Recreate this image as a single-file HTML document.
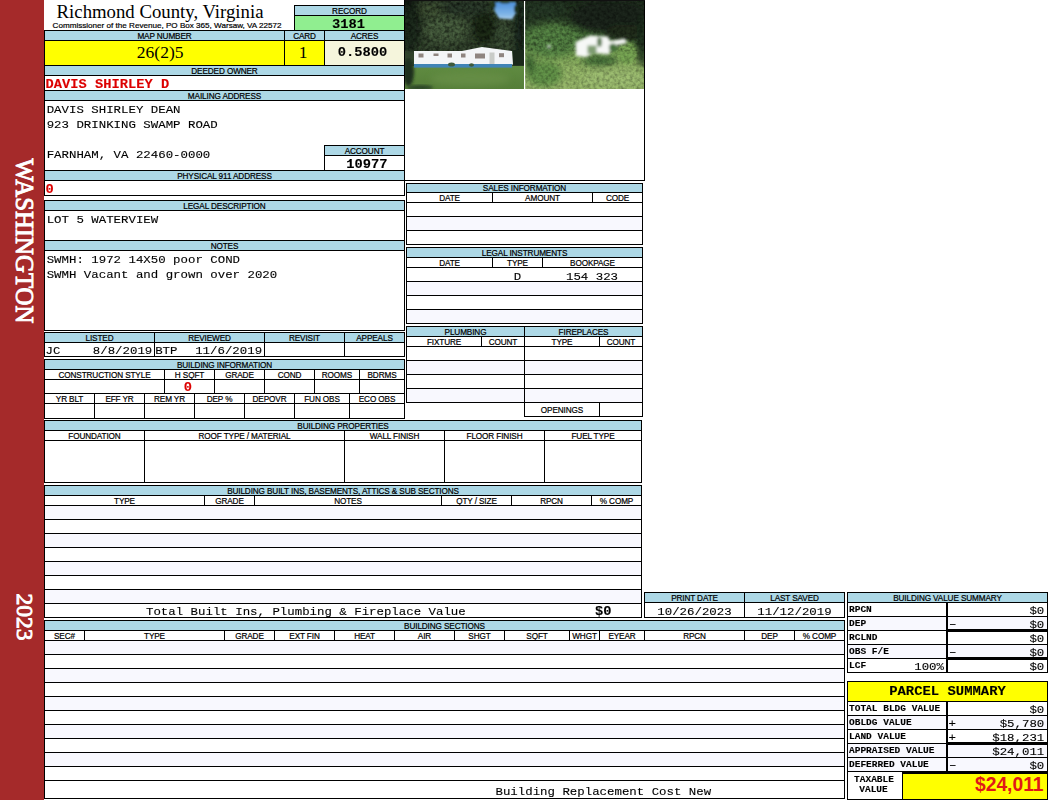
<!DOCTYPE html>
<html lang="en"><head><meta charset="utf-8"><title>Richmond County, Virginia - Property Record 3181</title>
<style>
html,body{margin:0;padding:0;background:#fff;}
body{width:1050px;height:800px;position:relative;overflow:hidden;font-family:"Liberation Sans",Arial,sans-serif;color:#000;}
.c{position:absolute;box-sizing:border-box;border:1px solid #000;}
.k{position:absolute;background:#000;}
.x{position:absolute;white-space:pre;margin:0;padding:0;}
.s{font-family:"Liberation Sans",Arial,sans-serif;-webkit-text-stroke:0.2px #000;}
.m{font-family:"Liberation Mono","Courier New",monospace;-webkit-text-stroke:0.12px currentColor;}
.t{font-family:"Liberation Serif","Times New Roman",serif;}
.side{position:absolute;left:0;top:0;width:44px;height:800px;background:#a52a2a;}
.vt{position:absolute;color:#fff;font-family:"Liberation Serif","Times New Roman",serif;font-weight:normal;-webkit-text-stroke:0.9px #fff;white-space:pre;line-height:1;transform:translate(-50%,-50%) rotate(90deg);}
</style></head>
<body>
<div class="side"></div>
<div class="vt" style="left:24px;top:241px;font-size:24.8px;">WASHINGTON</div>
<div class="vt" style="left:24.2px;top:617px;font-size:23.6px;">2023</div>
<div class="x t" style="top:0px;font-size:18.75px;line-height:23px;height:23px;left:56.6px;">Richmond County, Virginia</div>
<div class="x s" style="top:20px;font-size:8.1px;line-height:11px;height:11px;left:52.6px;">Commissioner of the Revenue, PO Box 365, Warsaw, VA 22572</div>
<div class="c" style="left:294px;top:5px;width:111px;height:11px;background:#add8e6;"></div>
<div class="x s" style="top:6px;font-size:8.2px;line-height:11px;height:11px;left:274.5px;width:150px;text-align:center;letter-spacing:-0.12px;">RECORD</div>
<div class="c" style="left:294px;top:15px;width:111px;height:16px;background:#90ee90;"></div>
<div class="x m" style="top:16px;font-size:13.75px;line-height:17px;height:17px;left:298.5px;width:100px;text-align:center;font-weight:bold;transform:scaleY(0.88);transform-origin:50% 12px;">3181</div>
<div class="c" style="left:44px;top:30px;width:241px;height:11px;background:#add8e6;"></div>
<div class="x s" style="top:31px;font-size:8.2px;line-height:11px;height:11px;left:24.5px;width:280px;text-align:center;letter-spacing:-0.12px;">MAP NUMBER</div>
<div class="c" style="left:284px;top:30px;width:41px;height:11px;background:#add8e6;"></div>
<div class="x s" style="top:31px;font-size:8.2px;line-height:11px;height:11px;left:264.5px;width:80px;text-align:center;letter-spacing:-0.12px;">CARD</div>
<div class="c" style="left:324px;top:30px;width:81px;height:11px;background:#add8e6;"></div>
<div class="x s" style="top:31px;font-size:8.2px;line-height:11px;height:11px;left:304.5px;width:120px;text-align:center;letter-spacing:-0.12px;">ACRES</div>
<div class="c" style="left:44px;top:40px;width:241px;height:26px;background:#ffff00;"></div>
<div class="c" style="left:284px;top:40px;width:41px;height:26px;background:#ffff00;"></div>
<div class="c" style="left:324px;top:40px;width:81px;height:26px;background:#f5f5dc;"></div>
<div class="x t" style="top:41px;font-size:17.5px;line-height:22px;height:22px;left:60.2px;width:200px;text-align:center;">26(2)5</div>
<div class="x t" style="top:41px;font-size:17.5px;line-height:22px;height:22px;left:288.2px;width:30px;text-align:center;">1</div>
<div class="x m" style="top:44px;font-size:13.75px;line-height:17px;height:17px;left:323.5px;width:78px;text-align:center;font-weight:bold;transform:scaleY(0.88);transform-origin:50% 12px;">0.5800</div>
<div class="c" style="left:44px;top:65px;width:361px;height:11px;background:#add8e6;"></div>
<div class="x s" style="top:66px;font-size:8.2px;line-height:11px;height:11px;left:24.5px;width:400px;text-align:center;letter-spacing:-0.12px;">DEEDED OWNER</div>
<div class="c" style="left:44px;top:75px;width:361px;height:16px;"></div>
<div class="x m" style="top:76px;font-size:13.75px;line-height:17px;height:17px;left:45.6px;color:#dc0000;font-weight:bold;transform:scaleY(0.88);transform-origin:0 12px;">DAVIS SHIRLEY D</div>
<div class="c" style="left:44px;top:90px;width:361px;height:11px;background:#add8e6;"></div>
<div class="x s" style="top:91px;font-size:8.2px;line-height:11px;height:11px;left:24.5px;width:400px;text-align:center;letter-spacing:-0.12px;">MAILING ADDRESS</div>
<div class="c" style="left:44px;top:100px;width:361px;height:71px;"></div>
<div class="x m" style="top:102px;font-size:12.4px;line-height:16px;height:16px;left:46.7px;transform:scaleY(0.88);transform-origin:0 11px;">DAVIS SHIRLEY DEAN</div>
<div class="x m" style="top:117px;font-size:12.4px;line-height:16px;height:16px;left:46.7px;transform:scaleY(0.88);transform-origin:0 11px;">923 DRINKING SWAMP ROAD</div>
<div class="x m" style="top:147px;font-size:12.4px;line-height:16px;height:16px;left:46.7px;transform:scaleY(0.88);transform-origin:0 11px;">FARNHAM, VA 22460-0000</div>
<div class="c" style="left:324px;top:145px;width:81px;height:11px;background:#add8e6;"></div>
<div class="x s" style="top:146px;font-size:8.2px;line-height:11px;height:11px;left:304.5px;width:120px;text-align:center;letter-spacing:-0.12px;">ACCOUNT</div>
<div class="c" style="left:324px;top:155px;width:81px;height:16px;"></div>
<div class="x m" style="top:156px;font-size:13.75px;line-height:17px;height:17px;left:328.0px;width:78px;text-align:center;font-weight:bold;transform:scaleY(0.88);transform-origin:50% 12px;">10977</div>
<div class="c" style="left:44px;top:170px;width:361px;height:11px;background:#add8e6;"></div>
<div class="x s" style="top:171px;font-size:8.2px;line-height:11px;height:11px;left:24.5px;width:400px;text-align:center;letter-spacing:-0.12px;">PHYSICAL 911 ADDRESS</div>
<div class="c" style="left:44px;top:180px;width:361px;height:16px;"></div>
<div class="x m" style="top:181px;font-size:13.75px;line-height:17px;height:17px;left:45.6px;color:#dc0000;font-weight:bold;transform:scaleY(0.88);transform-origin:0 12px;">0</div>
<div class="c" style="left:44px;top:200px;width:361px;height:11px;background:#add8e6;"></div>
<div class="x s" style="top:201px;font-size:8.2px;line-height:11px;height:11px;left:24.5px;width:400px;text-align:center;letter-spacing:-0.12px;">LEGAL DESCRIPTION</div>
<div class="c" style="left:44px;top:210px;width:361px;height:31px;"></div>
<div class="x m" style="top:212px;font-size:12.4px;line-height:16px;height:16px;left:46.7px;transform:scaleY(0.88);transform-origin:0 11px;">LOT 5 WATERVIEW</div>
<div class="c" style="left:44px;top:240px;width:361px;height:11px;background:#add8e6;"></div>
<div class="x s" style="top:241px;font-size:8.2px;line-height:11px;height:11px;left:24.5px;width:400px;text-align:center;letter-spacing:-0.12px;">NOTES</div>
<div class="c" style="left:44px;top:250px;width:361px;height:81px;"></div>
<div class="x m" style="top:252px;font-size:12.4px;line-height:16px;height:16px;left:46.7px;transform:scaleY(0.88);transform-origin:0 11px;">SWMH: 1972 14X50 poor COND</div>
<div class="x m" style="top:267px;font-size:12.4px;line-height:16px;height:16px;left:46.7px;transform:scaleY(0.88);transform-origin:0 11px;">SWMH Vacant and grown over 2020</div>
<div class="c" style="left:44px;top:332px;width:111px;height:11px;background:#add8e6;"></div>
<div class="x s" style="top:333px;font-size:8.2px;line-height:11px;height:11px;left:24.5px;width:150px;text-align:center;letter-spacing:-0.12px;">LISTED</div>
<div class="c" style="left:44px;top:342px;width:111px;height:15px;"></div>
<div class="c" style="left:154px;top:332px;width:111px;height:11px;background:#add8e6;"></div>
<div class="x s" style="top:333px;font-size:8.2px;line-height:11px;height:11px;left:134.5px;width:150px;text-align:center;letter-spacing:-0.12px;">REVIEWED</div>
<div class="c" style="left:154px;top:342px;width:111px;height:15px;"></div>
<div class="c" style="left:264px;top:332px;width:81px;height:11px;background:#add8e6;"></div>
<div class="x s" style="top:333px;font-size:8.2px;line-height:11px;height:11px;left:244.5px;width:120px;text-align:center;letter-spacing:-0.12px;">REVISIT</div>
<div class="c" style="left:264px;top:342px;width:81px;height:15px;"></div>
<div class="c" style="left:344px;top:332px;width:61px;height:11px;background:#add8e6;"></div>
<div class="x s" style="top:333px;font-size:8.2px;line-height:11px;height:11px;left:324.5px;width:100px;text-align:center;letter-spacing:-0.12px;">APPEALS</div>
<div class="c" style="left:344px;top:342px;width:61px;height:15px;"></div>
<div class="x m" style="top:343px;font-size:12.4px;line-height:16px;height:16px;left:45.6px;transform:scaleY(0.88);transform-origin:0 11px;">JC</div>
<div class="x m" style="top:343px;font-size:12.4px;line-height:16px;height:16px;left:92.8px;transform:scaleY(0.88);transform-origin:0 11px;">8/8/2019</div>
<div class="x m" style="top:343px;font-size:12.4px;line-height:16px;height:16px;left:155.2px;transform:scaleY(0.88);transform-origin:0 11px;">BTP</div>
<div class="x m" style="top:343px;font-size:12.4px;line-height:16px;height:16px;left:195.2px;transform:scaleY(0.88);transform-origin:0 11px;">11/6/2019</div>
<div class="c" style="left:44px;top:359px;width:361px;height:11px;background:#add8e6;"></div>
<div class="x s" style="top:360px;font-size:8.2px;line-height:11px;height:11px;left:24.5px;width:400px;text-align:center;letter-spacing:-0.12px;">BUILDING INFORMATION</div>
<div class="c" style="left:44px;top:369px;width:121px;height:11px;"></div>
<div class="x s" style="top:370px;font-size:8.2px;line-height:11px;height:11px;left:24.5px;width:160px;text-align:center;letter-spacing:-0.12px;">CONSTRUCTION STYLE</div>
<div class="c" style="left:44px;top:379px;width:121px;height:15px;"></div>
<div class="c" style="left:164px;top:369px;width:51px;height:11px;"></div>
<div class="x s" style="top:370px;font-size:8.2px;line-height:11px;height:11px;left:144.5px;width:90px;text-align:center;letter-spacing:-0.12px;">H SQFT</div>
<div class="c" style="left:164px;top:379px;width:51px;height:15px;"></div>
<div class="c" style="left:214px;top:369px;width:51px;height:11px;"></div>
<div class="x s" style="top:370px;font-size:8.2px;line-height:11px;height:11px;left:194.5px;width:90px;text-align:center;letter-spacing:-0.12px;">GRADE</div>
<div class="c" style="left:214px;top:379px;width:51px;height:15px;"></div>
<div class="c" style="left:264px;top:369px;width:51px;height:11px;"></div>
<div class="x s" style="top:370px;font-size:8.2px;line-height:11px;height:11px;left:244.5px;width:90px;text-align:center;letter-spacing:-0.12px;">COND</div>
<div class="c" style="left:264px;top:379px;width:51px;height:15px;"></div>
<div class="c" style="left:314px;top:369px;width:46px;height:11px;"></div>
<div class="x s" style="top:370px;font-size:8.2px;line-height:11px;height:11px;left:294.5px;width:85px;text-align:center;letter-spacing:-0.12px;">ROOMS</div>
<div class="c" style="left:314px;top:379px;width:46px;height:15px;"></div>
<div class="c" style="left:359px;top:369px;width:46px;height:11px;"></div>
<div class="x s" style="top:370px;font-size:8.2px;line-height:11px;height:11px;left:339.5px;width:85px;text-align:center;letter-spacing:-0.12px;">BDRMS</div>
<div class="c" style="left:359px;top:379px;width:46px;height:15px;"></div>
<div class="x m" style="top:379px;font-size:13.75px;line-height:17px;height:17px;left:168.0px;width:40px;text-align:center;color:#dc0000;font-weight:bold;transform:scaleY(0.88);transform-origin:50% 12px;">0</div>
<div class="c" style="left:44px;top:393px;width:51px;height:11px;"></div>
<div class="x s" style="top:394px;font-size:8.2px;line-height:11px;height:11px;left:24.5px;width:90px;text-align:center;letter-spacing:-0.12px;">YR BLT</div>
<div class="c" style="left:44px;top:403px;width:51px;height:16px;"></div>
<div class="c" style="left:94px;top:393px;width:51px;height:11px;"></div>
<div class="x s" style="top:394px;font-size:8.2px;line-height:11px;height:11px;left:74.5px;width:90px;text-align:center;letter-spacing:-0.12px;">EFF YR</div>
<div class="c" style="left:94px;top:403px;width:51px;height:16px;"></div>
<div class="c" style="left:144px;top:393px;width:51px;height:11px;"></div>
<div class="x s" style="top:394px;font-size:8.2px;line-height:11px;height:11px;left:124.5px;width:90px;text-align:center;letter-spacing:-0.12px;">REM YR</div>
<div class="c" style="left:144px;top:403px;width:51px;height:16px;"></div>
<div class="c" style="left:194px;top:393px;width:51px;height:11px;"></div>
<div class="x s" style="top:394px;font-size:8.2px;line-height:11px;height:11px;left:174.5px;width:90px;text-align:center;letter-spacing:-0.12px;">DEP %</div>
<div class="c" style="left:194px;top:403px;width:51px;height:16px;"></div>
<div class="c" style="left:244px;top:393px;width:51px;height:11px;"></div>
<div class="x s" style="top:394px;font-size:8.2px;line-height:11px;height:11px;left:224.5px;width:90px;text-align:center;letter-spacing:-0.12px;">DEPOVR</div>
<div class="c" style="left:244px;top:403px;width:51px;height:16px;"></div>
<div class="c" style="left:294px;top:393px;width:56px;height:11px;"></div>
<div class="x s" style="top:394px;font-size:8.2px;line-height:11px;height:11px;left:274.5px;width:95px;text-align:center;letter-spacing:-0.12px;">FUN OBS</div>
<div class="c" style="left:294px;top:403px;width:56px;height:16px;"></div>
<div class="c" style="left:349px;top:393px;width:56px;height:11px;"></div>
<div class="x s" style="top:394px;font-size:8.2px;line-height:11px;height:11px;left:329.5px;width:95px;text-align:center;letter-spacing:-0.12px;">ECO OBS</div>
<div class="c" style="left:349px;top:403px;width:56px;height:16px;"></div>
<div class="c" style="left:44px;top:420px;width:598px;height:11px;background:#add8e6;"></div>
<div class="x s" style="top:421px;font-size:8.2px;line-height:11px;height:11px;left:24.5px;width:637px;text-align:center;letter-spacing:-0.12px;">BUILDING PROPERTIES</div>
<div class="c" style="left:44px;top:430px;width:101px;height:11px;"></div>
<div class="x s" style="top:431px;font-size:8.2px;line-height:11px;height:11px;left:24.5px;width:140px;text-align:center;letter-spacing:-0.12px;">FOUNDATION</div>
<div class="c" style="left:44px;top:440px;width:101px;height:43px;"></div>
<div class="c" style="left:144px;top:430px;width:201px;height:11px;"></div>
<div class="x s" style="top:431px;font-size:8.2px;line-height:11px;height:11px;left:124.5px;width:240px;text-align:center;letter-spacing:-0.12px;">ROOF TYPE / MATERIAL</div>
<div class="c" style="left:144px;top:440px;width:201px;height:43px;"></div>
<div class="c" style="left:344px;top:430px;width:101px;height:11px;"></div>
<div class="x s" style="top:431px;font-size:8.2px;line-height:11px;height:11px;left:324.5px;width:140px;text-align:center;letter-spacing:-0.12px;">WALL FINISH</div>
<div class="c" style="left:344px;top:440px;width:101px;height:43px;"></div>
<div class="c" style="left:444px;top:430px;width:101px;height:11px;"></div>
<div class="x s" style="top:431px;font-size:8.2px;line-height:11px;height:11px;left:424.5px;width:140px;text-align:center;letter-spacing:-0.12px;">FLOOR FINISH</div>
<div class="c" style="left:444px;top:440px;width:101px;height:43px;"></div>
<div class="c" style="left:544px;top:430px;width:98px;height:11px;"></div>
<div class="x s" style="top:431px;font-size:8.2px;line-height:11px;height:11px;left:524.5px;width:137px;text-align:center;letter-spacing:-0.12px;">FUEL TYPE</div>
<div class="c" style="left:544px;top:440px;width:98px;height:43px;"></div>
<div class="c" style="left:44px;top:485px;width:598px;height:11px;background:#add8e6;"></div>
<div class="x s" style="top:486px;font-size:8.2px;line-height:11px;height:11px;left:24.5px;width:637px;text-align:center;letter-spacing:-0.12px;">BUILDING BUILT INS, BASEMENTS, ATTICS &amp; SUB SECTIONS</div>
<div class="c" style="left:44px;top:495px;width:161px;height:11px;"></div>
<div class="x s" style="top:496px;font-size:8.2px;line-height:11px;height:11px;left:24.5px;width:200px;text-align:center;letter-spacing:-0.12px;">TYPE</div>
<div class="c" style="left:204px;top:495px;width:51px;height:11px;"></div>
<div class="x s" style="top:496px;font-size:8.2px;line-height:11px;height:11px;left:184.5px;width:90px;text-align:center;letter-spacing:-0.12px;">GRADE</div>
<div class="c" style="left:254px;top:495px;width:188px;height:11px;"></div>
<div class="x s" style="top:496px;font-size:8.2px;line-height:11px;height:11px;left:234.5px;width:227px;text-align:center;letter-spacing:-0.12px;">NOTES</div>
<div class="c" style="left:441px;top:495px;width:71px;height:11px;"></div>
<div class="x s" style="top:496px;font-size:8.2px;line-height:11px;height:11px;left:421.5px;width:110px;text-align:center;letter-spacing:-0.12px;">QTY / SIZE</div>
<div class="c" style="left:511px;top:495px;width:81px;height:11px;"></div>
<div class="x s" style="top:496px;font-size:8.2px;line-height:11px;height:11px;left:491.5px;width:120px;text-align:center;letter-spacing:-0.12px;">RPCN</div>
<div class="c" style="left:591px;top:495px;width:51px;height:11px;"></div>
<div class="x s" style="top:496px;font-size:8.2px;line-height:11px;height:11px;left:571.5px;width:90px;text-align:center;letter-spacing:-0.12px;">% COMP</div>
<div class="c" style="left:44px;top:505px;width:598px;height:15px;background:#f8f8fe;"></div>
<div class="c" style="left:44px;top:519px;width:598px;height:15px;"></div>
<div class="c" style="left:44px;top:533px;width:598px;height:15px;background:#f8f8fe;"></div>
<div class="c" style="left:44px;top:547px;width:598px;height:15px;"></div>
<div class="c" style="left:44px;top:561px;width:598px;height:15px;background:#f8f8fe;"></div>
<div class="c" style="left:44px;top:575px;width:598px;height:15px;"></div>
<div class="c" style="left:44px;top:589px;width:598px;height:15px;background:#f8f8fe;"></div>
<div class="c" style="left:44px;top:603px;width:598px;height:15px;"></div>
<div class="x m" style="top:604px;font-size:12.4px;line-height:16px;height:16px;left:146px;transform:scaleY(0.88);transform-origin:0 11px;">Total Built Ins, Plumbing &amp; Fireplace Value</div>
<div class="x m" style="top:603px;font-size:13.75px;line-height:17px;height:17px;left:551.5px;width:60px;text-align:right;font-weight:bold;transform:scaleY(0.88);transform-origin:100% 12px;">$0</div>
<div class="c" style="left:44px;top:620px;width:801px;height:11px;background:#add8e6;"></div>
<div class="x s" style="top:621px;font-size:8.2px;line-height:11px;height:11px;left:24.5px;width:840px;text-align:center;letter-spacing:-0.12px;">BUILDING SECTIONS</div>
<div class="c" style="left:44px;top:630px;width:41px;height:11px;"></div>
<div class="x s" style="top:631px;font-size:8.2px;line-height:11px;height:11px;left:24.5px;width:80px;text-align:center;letter-spacing:-0.12px;">SEC#</div>
<div class="c" style="left:84px;top:630px;width:141px;height:11px;"></div>
<div class="x s" style="top:631px;font-size:8.2px;line-height:11px;height:11px;left:64.5px;width:180px;text-align:center;letter-spacing:-0.12px;">TYPE</div>
<div class="c" style="left:224px;top:630px;width:51px;height:11px;"></div>
<div class="x s" style="top:631px;font-size:8.2px;line-height:11px;height:11px;left:204.5px;width:90px;text-align:center;letter-spacing:-0.12px;">GRADE</div>
<div class="c" style="left:274px;top:630px;width:61px;height:11px;"></div>
<div class="x s" style="top:631px;font-size:8.2px;line-height:11px;height:11px;left:254.5px;width:100px;text-align:center;letter-spacing:-0.12px;">EXT FIN</div>
<div class="c" style="left:334px;top:630px;width:61px;height:11px;"></div>
<div class="x s" style="top:631px;font-size:8.2px;line-height:11px;height:11px;left:314.5px;width:100px;text-align:center;letter-spacing:-0.12px;">HEAT</div>
<div class="c" style="left:394px;top:630px;width:61px;height:11px;"></div>
<div class="x s" style="top:631px;font-size:8.2px;line-height:11px;height:11px;left:374.5px;width:100px;text-align:center;letter-spacing:-0.12px;">AIR</div>
<div class="c" style="left:454px;top:630px;width:51px;height:11px;"></div>
<div class="x s" style="top:631px;font-size:8.2px;line-height:11px;height:11px;left:434.5px;width:90px;text-align:center;letter-spacing:-0.12px;">SHGT</div>
<div class="c" style="left:504px;top:630px;width:66px;height:11px;"></div>
<div class="x s" style="top:631px;font-size:8.2px;line-height:11px;height:11px;left:484.5px;width:105px;text-align:center;letter-spacing:-0.12px;">SQFT</div>
<div class="c" style="left:569px;top:630px;width:31px;height:11px;"></div>
<div class="x s" style="top:631px;font-size:8.2px;line-height:11px;height:11px;left:549.5px;width:70px;text-align:center;letter-spacing:-0.12px;">WHGT</div>
<div class="c" style="left:599px;top:630px;width:46px;height:11px;"></div>
<div class="x s" style="top:631px;font-size:8.2px;line-height:11px;height:11px;left:579.5px;width:85px;text-align:center;letter-spacing:-0.12px;">EYEAR</div>
<div class="c" style="left:644px;top:630px;width:101px;height:11px;"></div>
<div class="x s" style="top:631px;font-size:8.2px;line-height:11px;height:11px;left:624.5px;width:140px;text-align:center;letter-spacing:-0.12px;">RPCN</div>
<div class="c" style="left:744px;top:630px;width:51px;height:11px;"></div>
<div class="x s" style="top:631px;font-size:8.2px;line-height:11px;height:11px;left:724.5px;width:90px;text-align:center;letter-spacing:-0.12px;">DEP</div>
<div class="c" style="left:794px;top:630px;width:51px;height:11px;"></div>
<div class="x s" style="top:631px;font-size:8.2px;line-height:11px;height:11px;left:774.5px;width:90px;text-align:center;letter-spacing:-0.12px;">% COMP</div>
<div class="c" style="left:44px;top:640px;width:801px;height:15px;background:#f8f8fe;"></div>
<div class="c" style="left:44px;top:654px;width:801px;height:15px;"></div>
<div class="c" style="left:44px;top:668px;width:801px;height:15px;background:#f8f8fe;"></div>
<div class="c" style="left:44px;top:682px;width:801px;height:15px;"></div>
<div class="c" style="left:44px;top:696px;width:801px;height:15px;background:#f8f8fe;"></div>
<div class="c" style="left:44px;top:710px;width:801px;height:15px;"></div>
<div class="c" style="left:44px;top:724px;width:801px;height:15px;background:#f8f8fe;"></div>
<div class="c" style="left:44px;top:738px;width:801px;height:15px;"></div>
<div class="c" style="left:44px;top:752px;width:801px;height:15px;background:#f8f8fe;"></div>
<div class="c" style="left:44px;top:766px;width:801px;height:15px;"></div>
<div class="c" style="left:44px;top:780px;width:801px;height:19px;"></div>
<div class="x m" style="top:784px;font-size:12.4px;line-height:16px;height:16px;left:495.5px;transform:scaleY(0.88);transform-origin:0 11px;">Building Replacement Cost New</div>
<div class="c" style="left:404px;top:0px;width:241px;height:181px;background:#ffffff;"></div>
<svg class="ph" width="240" height="90" viewBox="405 0 240 90" style="position:absolute;left:405px;top:0px">
<defs>
<filter id="b1" x="-20%" y="-20%" width="140%" height="140%"><feGaussianBlur stdDeviation="1.4"/></filter>
<filter id="b2" x="-20%" y="-20%" width="140%" height="140%"><feGaussianBlur stdDeviation="3"/></filter>
<filter id="b0" x="-10%" y="-10%" width="120%" height="120%"><feGaussianBlur stdDeviation="0.5"/></filter>
<filter id="b05" x="-10%" y="-10%" width="120%" height="120%"><feGaussianBlur stdDeviation="0.8"/></filter>
<filter id="nz" x="0" y="0" width="100%" height="100%">
<feTurbulence type="fractalNoise" baseFrequency="0.3" numOctaves="2" seed="11" result="n"/>
<feColorMatrix in="n" type="matrix" values="0 0 0 0 0  0 0 0 0 0  0 0 0 0 0  2.2 0 0 0 -0.85" result="a"/>
<feComposite in="a" in2="SourceGraphic" operator="in"/>
</filter>
<filter id="nl" x="0" y="0" width="100%" height="100%">
<feTurbulence type="fractalNoise" baseFrequency="0.33" numOctaves="2" seed="23" result="n"/>
<feColorMatrix in="n" type="matrix" values="0 0 0 0 0  0 0 0 0 0  0 0 0 0 0  0 2.2 0 0 -0.9" result="a"/>
<feComposite in="a" in2="SourceGraphic" operator="in"/>
</filter>
<linearGradient id="lawn" x1="0" y1="0" x2="0" y2="1"><stop offset="0" stop-color="#608b41"/><stop offset="1" stop-color="#557e39"/></linearGradient>
<linearGradient id="sky" x1="0" y1="0" x2="0" y2="1"><stop offset="0" stop-color="#4b8fdc"/><stop offset="0.7" stop-color="#7fb4e6"/><stop offset="1" stop-color="#a9cdea"/></linearGradient>
<linearGradient id="p2" x1="0" y1="0" x2="0" y2="1"><stop offset="0" stop-color="#1f2e1d"/><stop offset="0.25" stop-color="#2b4027"/><stop offset="0.42" stop-color="#4a763c"/><stop offset="0.58" stop-color="#76a052"/><stop offset="0.75" stop-color="#92b566"/><stop offset="1" stop-color="#9aba6c"/></linearGradient>
<clipPath id="c1"><rect x="405" y="1" width="119" height="88"/></clipPath>
<clipPath id="c2"><rect x="525.200" y="1" width="118.800" height="88"/></clipPath>
</defs>
<rect x="405" y="0" width="240" height="1" fill="#111"/>
<g clip-path="url(#c1)">
<rect x="405" y="1" width="120" height="88" fill="#34452e"/>
<g filter="url(#b2)">
<ellipse cx="411" cy="22" rx="10" ry="30" fill="#1a291a"/>
<ellipse cx="446" cy="30" rx="22" ry="14" fill="#4a6040"/>
<ellipse cx="466" cy="8" rx="26" ry="8" fill="#2c3b29"/>
<ellipse cx="484" cy="28" rx="12" ry="16" fill="#1a2a19"/>
<ellipse cx="430" cy="10" rx="12" ry="7" fill="#3f5236"/>
<ellipse cx="407" cy="3" rx="7" ry="4" fill="#0a0f0a"/>
<ellipse cx="503" cy="36" rx="9" ry="12" fill="#3d5237"/>
<ellipse cx="520" cy="30" rx="5" ry="34" fill="#17251a"/>
</g>
<rect x="405" y="1" width="119" height="50" fill="#0d140d" filter="url(#nz)" opacity="0.5"/>
<rect x="405" y="1" width="119" height="50" fill="#7d9072" filter="url(#nl)" opacity="0.3"/>
<g filter="url(#b05)">
<path d="M494 2 L516 2 L516 13 L512 19.500 L499 18.500 L494.500 11 Z" fill="url(#sky)"/>
<ellipse cx="493" cy="5" rx="3" ry="3.500" fill="#22351f"/>
<ellipse cx="505" cy="2" rx="5" ry="1.500" fill="#2a3f27"/>
<ellipse cx="516" cy="9" rx="2" ry="4" fill="#1f301d"/>
</g>
<rect x="405" y="66" width="120" height="23" fill="url(#lawn)"/>
<ellipse cx="470" cy="79" rx="40" ry="7" fill="#688f46" filter="url(#b2)" opacity="0.8"/>
<ellipse cx="408.500" cy="72" rx="5.500" ry="14" fill="#1d2d1b" filter="url(#b1)"/>
<ellipse cx="420" cy="87.500" rx="13" ry="2.500" fill="#2a4526" filter="url(#b1)"/>
<rect x="513" y="50" width="11" height="15.500" fill="#1a281a"/>
<g filter="url(#b0)">
<path d="M414 51 L462 51 L482 47 L512 51 L513 64.500 L414 64.500 Z" fill="#f3f5f7"/>
<rect x="414" y="64" width="98" height="3.600" fill="#3f84b6"/>
<g fill="#8f8580">
<rect x="418.500" y="53.500" width="5" height="4"/>
<rect x="433.500" y="53.500" width="5" height="2.500"/>
<rect x="447.500" y="53.500" width="4.500" height="4"/>
<rect x="461" y="53.500" width="4.500" height="4"/>
<rect x="475" y="53.500" width="10" height="5"/>
<rect x="499" y="53.200" width="5" height="4"/>
</g>
<rect x="489.500" y="52.500" width="5" height="11.500" fill="#c9ccc8"/>
<ellipse cx="451.500" cy="64.500" rx="3.500" ry="2" fill="#3c5a3a"/>
<ellipse cx="471.500" cy="65" rx="2.500" ry="1.800" fill="#3c5a3a"/>
</g>
</g>
<g clip-path="url(#c2)">
<rect x="525" y="1" width="120" height="88" fill="url(#p2)"/>
<g filter="url(#b2)">
<ellipse cx="552" cy="40" rx="28" ry="17" fill="#568545"/>
<ellipse cx="544" cy="74" rx="18" ry="13" fill="#639448"/>
<ellipse cx="610" cy="16" rx="40" ry="16" fill="#1b261a"/>
<ellipse cx="545" cy="9" rx="22" ry="8" fill="#283a25"/>
<ellipse cx="625" cy="33" rx="22" ry="9" fill="#202e1f"/>
<ellipse cx="642" cy="40" rx="5" ry="28" fill="#1f2d1e"/>
<ellipse cx="600" cy="61" rx="18" ry="5" fill="#3f6b36"/>
<ellipse cx="615" cy="78" rx="34" ry="9" fill="#9fbf72"/>
<ellipse cx="530" cy="64" rx="4" ry="10" fill="#2f5a2c"/>
</g>
<ellipse cx="627" cy="53" rx="9" ry="11" fill="#7aa955" filter="url(#b1)"/>
<rect x="525" y="1" width="120" height="50" fill="#0b150b" filter="url(#nz)" opacity="0.38"/>
<rect x="525" y="51" width="120" height="38" fill="#1d3a1a" filter="url(#nz)" opacity="0.15"/>
<rect x="525" y="1" width="120" height="88" fill="#c0d58e" filter="url(#nl)" opacity="0.25"/>
<g filter="url(#b1)">
<path d="M575.500 42 L590 35.500 L608 36.500 L610 41 L625 38.500 L627 43 L611 46.500 L609 54.500 L594 53 L586 57 L576 56 Z" fill="#f6f8f6"/>
<rect x="587.500" y="45.500" width="9" height="8.500" fill="#7f9d72"/>
<ellipse cx="599.500" cy="42" rx="2.500" ry="5" fill="#5a7a50"/>
<ellipse cx="613" cy="47.500" rx="4" ry="4" fill="#456f3a"/>
<ellipse cx="549" cy="46.500" rx="1.800" ry="1.800" fill="#dfe9e0"/>
</g>
</g>
</svg>

<div class="c" style="left:406px;top:183px;width:237px;height:10px;background:#add8e6;"></div>
<div class="x s" style="top:183px;font-size:8.2px;line-height:11px;height:11px;left:386.5px;width:276px;text-align:center;letter-spacing:-0.12px;">SALES INFORMATION</div>
<div class="c" style="left:406px;top:192px;width:87px;height:11px;"></div>
<div class="x s" style="top:193px;font-size:8.2px;line-height:11px;height:11px;left:386.5px;width:126px;text-align:center;letter-spacing:-0.12px;">DATE</div>
<div class="c" style="left:492px;top:192px;width:101px;height:11px;"></div>
<div class="x s" style="top:193px;font-size:8.2px;line-height:11px;height:11px;left:472.5px;width:140px;text-align:center;letter-spacing:-0.12px;">AMOUNT</div>
<div class="c" style="left:592px;top:192px;width:51px;height:11px;"></div>
<div class="x s" style="top:193px;font-size:8.2px;line-height:11px;height:11px;left:572.5px;width:90px;text-align:center;letter-spacing:-0.12px;">CODE</div>
<div class="c" style="left:406px;top:202px;width:237px;height:15px;"></div>
<div class="c" style="left:406px;top:216px;width:237px;height:15px;background:#f8f8fe;"></div>
<div class="c" style="left:406px;top:230px;width:237px;height:15px;"></div>
<div class="c" style="left:406px;top:247px;width:237px;height:11px;background:#add8e6;"></div>
<div class="x s" style="top:248px;font-size:8.2px;line-height:11px;height:11px;left:386.5px;width:276px;text-align:center;letter-spacing:-0.12px;">LEGAL INSTRUMENTS</div>
<div class="c" style="left:406px;top:257px;width:87px;height:11px;"></div>
<div class="x s" style="top:258px;font-size:8.2px;line-height:11px;height:11px;left:386.5px;width:126px;text-align:center;letter-spacing:-0.12px;">DATE</div>
<div class="c" style="left:492px;top:257px;width:51px;height:11px;"></div>
<div class="x s" style="top:258px;font-size:8.2px;line-height:11px;height:11px;left:472.5px;width:90px;text-align:center;letter-spacing:-0.12px;">TYPE</div>
<div class="c" style="left:542px;top:257px;width:101px;height:11px;"></div>
<div class="x s" style="top:258px;font-size:8.2px;line-height:11px;height:11px;left:522.5px;width:140px;text-align:center;letter-spacing:-0.12px;">BOOKPAGE</div>
<div class="c" style="left:406px;top:267px;width:237px;height:15px;"></div>
<div class="c" style="left:406px;top:281px;width:237px;height:15px;background:#f8f8fe;"></div>
<div class="c" style="left:406px;top:295px;width:237px;height:15px;"></div>
<div class="c" style="left:406px;top:309px;width:237px;height:15px;background:#f8f8fe;"></div>
<div class="x m" style="top:269px;font-size:12.4px;line-height:16px;height:16px;left:497.5px;width:40px;text-align:center;transform:scaleY(0.88);transform-origin:50% 11px;">D</div>
<div class="x m" style="top:269px;font-size:12.4px;line-height:16px;height:16px;left:566px;transform:scaleY(0.88);transform-origin:0 11px;">154 323</div>
<div class="c" style="left:406px;top:326px;width:119px;height:11px;background:#add8e6;"></div>
<div class="x s" style="top:327px;font-size:8.2px;line-height:11px;height:11px;left:386.5px;width:158px;text-align:center;letter-spacing:-0.12px;">PLUMBING</div>
<div class="c" style="left:524px;top:326px;width:119px;height:11px;background:#add8e6;"></div>
<div class="x s" style="top:327px;font-size:8.2px;line-height:11px;height:11px;left:504.5px;width:158px;text-align:center;letter-spacing:-0.12px;">FIREPLACES</div>
<div class="c" style="left:406px;top:336px;width:76px;height:11px;"></div>
<div class="x s" style="top:337px;font-size:8.2px;line-height:11px;height:11px;left:386.5px;width:115px;text-align:center;letter-spacing:-0.12px;">FIXTURE</div>
<div class="c" style="left:481px;top:336px;width:44px;height:11px;"></div>
<div class="x s" style="top:337px;font-size:8.2px;line-height:11px;height:11px;left:461.5px;width:83px;text-align:center;letter-spacing:-0.12px;">COUNT</div>
<div class="c" style="left:524px;top:336px;width:76px;height:11px;"></div>
<div class="x s" style="top:337px;font-size:8.2px;line-height:11px;height:11px;left:504.5px;width:115px;text-align:center;letter-spacing:-0.12px;">TYPE</div>
<div class="c" style="left:599px;top:336px;width:44px;height:11px;"></div>
<div class="x s" style="top:337px;font-size:8.2px;line-height:11px;height:11px;left:579.5px;width:83px;text-align:center;letter-spacing:-0.12px;">COUNT</div>
<div class="c" style="left:406px;top:346px;width:119px;height:15px;"></div>
<div class="c" style="left:524px;top:346px;width:119px;height:15px;"></div>
<div class="c" style="left:406px;top:360px;width:119px;height:15px;background:#f8f8fe;"></div>
<div class="c" style="left:524px;top:360px;width:119px;height:15px;background:#f8f8fe;"></div>
<div class="c" style="left:406px;top:374px;width:119px;height:15px;"></div>
<div class="c" style="left:524px;top:374px;width:119px;height:15px;"></div>
<div class="c" style="left:406px;top:388px;width:119px;height:15px;background:#f8f8fe;"></div>
<div class="c" style="left:524px;top:388px;width:119px;height:15px;background:#f8f8fe;"></div>
<div class="c" style="left:524px;top:402px;width:76px;height:15px;"></div>
<div class="c" style="left:599px;top:402px;width:44px;height:15px;"></div>
<div class="x s" style="top:405px;font-size:8.2px;line-height:11px;height:11px;left:527.0px;width:70px;text-align:center;letter-spacing:-0.12px;">OPENINGS</div>
<div class="c" style="left:644px;top:592px;width:101px;height:11px;background:#add8e6;"></div>
<div class="x s" style="top:593px;font-size:8.2px;line-height:11px;height:11px;left:624.5px;width:140px;text-align:center;letter-spacing:-0.12px;">PRINT DATE</div>
<div class="c" style="left:744px;top:592px;width:101px;height:11px;background:#add8e6;"></div>
<div class="x s" style="top:593px;font-size:8.2px;line-height:11px;height:11px;left:724.5px;width:140px;text-align:center;letter-spacing:-0.12px;">LAST SAVED</div>
<div class="c" style="left:644px;top:602px;width:101px;height:16px;"></div>
<div class="c" style="left:744px;top:602px;width:101px;height:16px;"></div>
<div class="x m" style="top:604px;font-size:12.4px;line-height:16px;height:16px;left:645.5px;width:98px;text-align:center;transform:scaleY(0.88);transform-origin:50% 11px;">10/26/2023</div>
<div class="x m" style="top:604px;font-size:12.4px;line-height:16px;height:16px;left:745.5px;width:98px;text-align:center;transform:scaleY(0.88);transform-origin:50% 11px;">11/12/2019</div>
<div class="c" style="left:847px;top:592px;width:201px;height:11px;background:#add8e6;"></div>
<div class="x s" style="top:593px;font-size:8.2px;line-height:11px;height:11px;left:827.5px;width:240px;text-align:center;letter-spacing:-0.12px;">BUILDING VALUE SUMMARY</div>
<div class="c" style="left:847px;top:602px;width:100px;height:15px;"></div>
<div class="c" style="left:946px;top:602px;width:102px;height:15px;"></div>
<div class="x m" style="top:603px;font-size:9.5px;line-height:13px;height:13px;left:849px;font-weight:bold;transform:scaleY(0.88);transform-origin:0 9px;">RPCN</div>
<div class="x m" style="top:603px;font-size:12.4px;line-height:16px;height:16px;left:964.3px;width:80px;text-align:right;transform:scaleY(0.88);transform-origin:100% 11px;">$0</div>
<div class="c" style="left:847px;top:616px;width:100px;height:15px;background:#f8f8fe;"></div>
<div class="c" style="left:946px;top:616px;width:102px;height:15px;background:#f8f8fe;"></div>
<div class="x m" style="top:617px;font-size:9.5px;line-height:13px;height:13px;left:849px;font-weight:bold;transform:scaleY(0.88);transform-origin:0 9px;">DEP</div>
<div class="x m" style="top:617px;font-size:12.4px;line-height:16px;height:16px;left:964.3px;width:80px;text-align:right;transform:scaleY(0.88);transform-origin:100% 11px;">$0</div>
<div class="x m" style="top:616px;font-size:12.4px;line-height:16px;height:16px;left:949px;transform:scaleY(0.88);transform-origin:0 11px;">–</div>
<div class="c" style="left:847px;top:630px;width:100px;height:15px;"></div>
<div class="c" style="left:946px;top:630px;width:102px;height:15px;"></div>
<div class="x m" style="top:631px;font-size:9.5px;line-height:13px;height:13px;left:849px;font-weight:bold;transform:scaleY(0.88);transform-origin:0 9px;">RCLND</div>
<div class="x m" style="top:631px;font-size:12.4px;line-height:16px;height:16px;left:964.3px;width:80px;text-align:right;transform:scaleY(0.88);transform-origin:100% 11px;">$0</div>
<div class="c" style="left:847px;top:644px;width:100px;height:15px;background:#f8f8fe;"></div>
<div class="c" style="left:946px;top:644px;width:102px;height:15px;background:#f8f8fe;"></div>
<div class="x m" style="top:645px;font-size:9.5px;line-height:13px;height:13px;left:849px;font-weight:bold;transform:scaleY(0.88);transform-origin:0 9px;">OBS F/E</div>
<div class="x m" style="top:645px;font-size:12.4px;line-height:16px;height:16px;left:964.3px;width:80px;text-align:right;transform:scaleY(0.88);transform-origin:100% 11px;">$0</div>
<div class="x m" style="top:644px;font-size:12.4px;line-height:16px;height:16px;left:949px;transform:scaleY(0.88);transform-origin:0 11px;">–</div>
<div class="c" style="left:847px;top:658px;width:100px;height:15px;"></div>
<div class="c" style="left:946px;top:658px;width:102px;height:15px;"></div>
<div class="x m" style="top:659px;font-size:9.5px;line-height:13px;height:13px;left:849px;font-weight:bold;transform:scaleY(0.88);transform-origin:0 9px;">LCF</div>
<div class="x m" style="top:659px;font-size:12.4px;line-height:16px;height:16px;left:964.3px;width:80px;text-align:right;transform:scaleY(0.88);transform-origin:100% 11px;">$0</div>
<div class="x m" style="top:659px;font-size:12.4px;line-height:16px;height:16px;left:894px;width:50px;text-align:right;transform:scaleY(0.88);transform-origin:100% 11px;">100%</div>
<div class="k" style="left:946px;top:602px;width:2px;height:71px"></div>
<div class="k" style="left:946px;top:629px;width:102px;height:3px"></div>
<div class="k" style="left:946px;top:657px;width:102px;height:3px"></div>
<div class="c" style="left:847px;top:681px;width:201px;height:21px;background:#ffff00;"></div>
<div class="x m" style="top:682px;font-size:13.9px;line-height:18px;height:18px;left:848.5px;width:198px;text-align:center;font-weight:bold;transform:scaleY(0.88);transform-origin:50% 13px;">PARCEL SUMMARY</div>
<div class="c" style="left:847px;top:701px;width:100px;height:15px;"></div>
<div class="c" style="left:946px;top:701px;width:102px;height:15px;"></div>
<div class="x m" style="top:702px;font-size:9.5px;line-height:13px;height:13px;left:849px;font-weight:bold;transform:scaleY(0.88);transform-origin:0 9px;">TOTAL BLDG VALUE</div>
<div class="x m" style="top:702px;font-size:12.4px;line-height:16px;height:16px;left:954.3px;width:90px;text-align:right;transform:scaleY(0.88);transform-origin:100% 11px;">$0</div>
<div class="c" style="left:847px;top:715px;width:100px;height:15px;background:#f8f8fe;"></div>
<div class="c" style="left:946px;top:715px;width:102px;height:15px;background:#f8f8fe;"></div>
<div class="x m" style="top:716px;font-size:9.5px;line-height:13px;height:13px;left:849px;font-weight:bold;transform:scaleY(0.88);transform-origin:0 9px;">OBLDG VALUE</div>
<div class="x m" style="top:716px;font-size:12.4px;line-height:16px;height:16px;left:954.3px;width:90px;text-align:right;transform:scaleY(0.88);transform-origin:100% 11px;">$5,780</div>
<div class="x m" style="top:716px;font-size:12.4px;line-height:16px;height:16px;left:948.4px;transform:scaleY(0.88);transform-origin:0 11px;">+</div>
<div class="c" style="left:847px;top:729px;width:100px;height:15px;"></div>
<div class="c" style="left:946px;top:729px;width:102px;height:15px;"></div>
<div class="x m" style="top:730px;font-size:9.5px;line-height:13px;height:13px;left:849px;font-weight:bold;transform:scaleY(0.88);transform-origin:0 9px;">LAND VALUE</div>
<div class="x m" style="top:730px;font-size:12.4px;line-height:16px;height:16px;left:954.3px;width:90px;text-align:right;transform:scaleY(0.88);transform-origin:100% 11px;">$18,231</div>
<div class="x m" style="top:730px;font-size:12.4px;line-height:16px;height:16px;left:948.4px;transform:scaleY(0.88);transform-origin:0 11px;">+</div>
<div class="c" style="left:847px;top:743px;width:100px;height:15px;background:#f8f8fe;"></div>
<div class="c" style="left:946px;top:743px;width:102px;height:15px;background:#f8f8fe;"></div>
<div class="x m" style="top:744px;font-size:9.5px;line-height:13px;height:13px;left:849px;font-weight:bold;transform:scaleY(0.88);transform-origin:0 9px;">APPRAISED VALUE</div>
<div class="x m" style="top:744px;font-size:12.4px;line-height:16px;height:16px;left:954.3px;width:90px;text-align:right;transform:scaleY(0.88);transform-origin:100% 11px;">$24,011</div>
<div class="c" style="left:847px;top:757px;width:100px;height:15px;background:#f8f8fe;"></div>
<div class="c" style="left:946px;top:757px;width:102px;height:15px;background:#f8f8fe;"></div>
<div class="x m" style="top:758px;font-size:9.5px;line-height:13px;height:13px;left:849px;font-weight:bold;transform:scaleY(0.88);transform-origin:0 9px;">DEFERRED VALUE</div>
<div class="x m" style="top:758px;font-size:12.4px;line-height:16px;height:16px;left:954.3px;width:90px;text-align:right;transform:scaleY(0.88);transform-origin:100% 11px;">$0</div>
<div class="x m" style="top:757px;font-size:12.4px;line-height:16px;height:16px;left:949px;transform:scaleY(0.88);transform-origin:0 11px;">–</div>
<div class="k" style="left:946px;top:701px;width:2px;height:71px"></div>
<div class="k" style="left:946px;top:742px;width:102px;height:3px"></div>
<div class="c" style="left:847px;top:771px;width:56px;height:29px;"></div>
<div class="c" style="left:902px;top:771px;width:146px;height:29px;background:#ffff00;"></div>
<div class="k" style="left:902px;top:771px;width:146px;height:3px"></div>
<div class="x m" style="top:773px;font-size:9.5px;line-height:13px;height:13px;left:847.0px;width:54px;text-align:center;font-weight:bold;transform:scaleY(0.88);transform-origin:50% 9px;">TAXABLE</div>
<div class="x m" style="top:783px;font-size:9.5px;line-height:13px;height:13px;left:846.5px;width:54px;text-align:center;font-weight:bold;transform:scaleY(0.88);transform-origin:50% 9px;">VALUE</div>
<div class="x s" style="top:773px;font-size:19.3px;line-height:23px;height:23px;left:903.6px;width:140px;text-align:right;color:#e01818;font-weight:bold;-webkit-text-stroke:0;">$24,011</div>
</body></html>
